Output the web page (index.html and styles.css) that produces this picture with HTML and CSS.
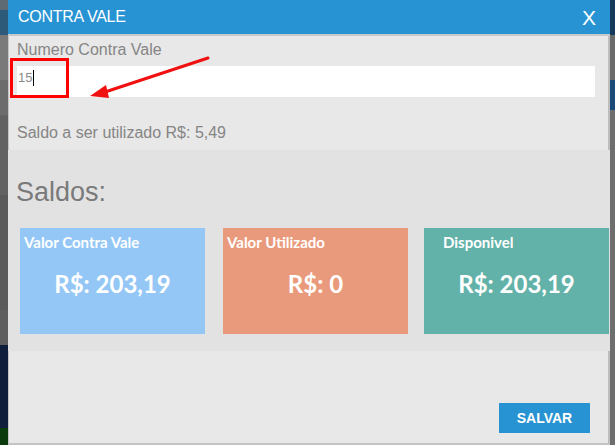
FILE: index.html
```html
<!DOCTYPE html>
<html lang="pt-BR">
<head>
    <meta charset="UTF-8">
    <meta name="viewport" content="width=device-width, initial-scale=1.0">
    <title>Contra Vale</title>
    <link rel="stylesheet" href="styles.css">
</head>
<body>

    <div class="page">
        <div class="gutter-left"></div>

        <div class="modal">
            <div class="modal-header">
                <span class="modal-title">CONTRA VALE</span>
                <span class="modal-close">X</span>
            </div>

            <div class="modal-section">
                <label class="field-label">Numero Contra Vale</label>
                <div class="field-input">15<span class="caret"></span></div>
                <p class="saldo-info">Saldo a ser utilizado R$: 5,49</p>
            </div>

            <div class="saldos">
                <h2>Saldos:</h2>
                <div class="cards">
                    <div class="card card-blue">
                        <div class="card-title">Valor Contra Vale</div>
                        <div class="card-value">R$: 203,19</div>
                    </div>
                    <div class="card card-orange">
                        <div class="card-title">Valor Utilizado</div>
                        <div class="card-value">R$: 0</div>
                    </div>
                    <div class="card card-green">
                        <div class="card-title indent">Disponivel</div>
                        <div class="card-value">R$: 203,19</div>
                    </div>
                </div>
            </div>

            <div class="modal-footer">
                <button type="button" class="save-btn">SALVAR</button>
            </div>
        </div>

        <div class="gutter-right"></div>

        <!-- marcação vermelha do print -->
        <div class="mark-box"></div>
        <svg class="mark-arrow" width="130" height="50" viewBox="0 0 130 50">
            <line x1="124" y1="3" x2="18" y2="38" stroke="#f01010" stroke-width="3" stroke-linecap="round"/>
            <polygon points="6,41 22,30 25,43" fill="#f01010"/>
        </svg>
    </div>

</body>
</html>
```

FILE: styles.css
```css
body {
    margin: 0;
    font-family: "Liberation Sans", Arial, sans-serif;
    background-color: #5c5c5c;
    overflow: hidden;
}

.page {
    position: relative;
    display: flex;
    width: 615px;
    height: 445px;
}

.gutter-left {
    width: 8px;
    background: linear-gradient(to bottom,
        #5f6b73 0, #5f6b73 10px,
        #2d5a78 10px, #2d5a78 35px,
        #7a7a7a 35px, #7a7a7a 80px,
        #6c6c6c 80px, #6c6c6c 115px,
        #626262 115px, #626262 195px,
        #5a5a5a 195px, #5a5a5a 310px,
        #5e5e5e 310px, #5e5e5e 345px,
        #0f1e3a 345px, #0f1e3a 428px,
        #0b3a0c 428px);
}

.gutter-right {
    width: 5px;
    background: linear-gradient(to bottom,
        #153a5c 0, #153a5c 35px,
        #6a6a6a 35px, #6a6a6a 80px,
        #1b4a78 80px, #1b4a78 110px,
        #6e6e6e 110px);
}

.modal {
    width: 602px;
    display: flex;
    flex-direction: column;
    background-color: #e8e8e8;
}

.modal-header {
    height: 34px;
    background-color: #2893d2;
    border-bottom: 2px solid #c9c9c9;
    display: flex;
    align-items: center;
    justify-content: space-between;
    padding: 0 14px 0 10px;
    color: #fff;
}

.modal-title {
    font-size: 16px;
    letter-spacing: -0.3px;
}

.modal-close {
    font-size: 21px;
    padding-top: 1px;
}

.modal-section {
    height: 114px;
    box-sizing: border-box;
    padding: 5px 13px 0 8px;
    border-left: 1px solid #c4c4c4;
    border-right: 2px solid #bdbdbd;
}

.field-label {
    display: block;
    font-size: 16px;
    color: #858585;
    line-height: 18px;
}

.field-input {
    margin-top: 7px;
    height: 31px;
    background-color: #fff;
    font-size: 13px;
    color: #8a8a8a;
    padding: 4px 0 0 1px;
    box-sizing: border-box;
    display: flex;
    align-items: flex-start;
}

.caret {
    width: 1px;
    height: 16px;
    margin-left: 1px;
    background-color: #000;
}

.saldo-info {
    margin: 27px 0 0;
    font-size: 16px;
    color: #858585;
}

.saldos {
    height: 201px;
    background-color: #e2e2e2;
    padding: 0 0 0 8px;
    box-sizing: border-box;
}

.saldos h2 {
    margin: 27px 0 0;
    font-size: 27px;
    font-weight: normal;
    color: #7a7a7a;
    line-height: 30px;
}

.cards {
    display: flex;
    gap: 18px;
    margin: 21px 0 0 4px;
}

.card {
    height: 106px;
    width: 185px;
    color: #fff;
    font-family: Lato, "Open Sans", sans-serif;
    font-weight: bold;
}

.card + .card + .card {
    margin-left: -2px;
}

.card-blue {
    background-color: #94c7f6;
}

.card-orange {
    background-color: #ea9a7c;
}

.card-green {
    background-color: #62b2a9;
}

.card-title {
    font-size: 15px;
    padding: 5px 0 0 4px;
}

.card-title.indent {
    padding-left: 19px;
}

.card-value {
    font-size: 24px;
    text-align: center;
    margin-top: 18px;
}

.modal-footer {
    flex: 1;
    display: flex;
    justify-content: flex-end;
    align-items: flex-start;
    padding: 52px 18px 0 0;
    border-left: 1px solid #c4c4c4;
    border-right: 2px solid #bdbdbd;
    border-bottom: 2px solid #c4c4c4;
}

.save-btn {
    width: 91px;
    height: 30px;
    border: none;
    background-color: #2893d2;
    color: #fff;
    font-family: "Liberation Sans", Arial, sans-serif;
    font-weight: bold;
    font-size: 14px;
    cursor: pointer;
}

.mark-box {
    position: absolute;
    left: 10px;
    top: 58px;
    width: 53px;
    height: 34px;
    border: 3px solid #f00;
}

.mark-arrow {
    position: absolute;
    left: 84px;
    top: 55px;
}
```
